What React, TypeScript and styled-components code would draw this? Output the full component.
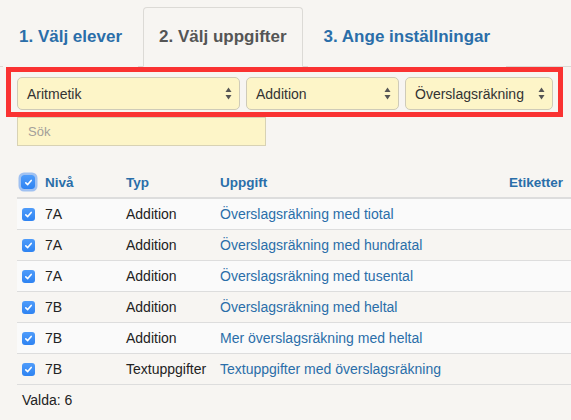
import React from 'react'
import styled, { createGlobalStyle } from 'styled-components'

const GlobalStyle = createGlobalStyle`
  body {
    margin: 0;
    background: #f7f5f2;
    font-family: "Liberation Sans", Arial, sans-serif;
    color: #333;
  }
`

const Page = styled.div`
  width: 571px;
  height: 420px;
  overflow: hidden;
`

const TabBar = styled.ul`
  display: flex;
  margin: 0;
  padding: 7px 0 0 3px;
  list-style: none;
  border-bottom: 1px solid #dcdad6;
`

const Tab = styled.li<{ $active?: boolean }>`
  height: 60px;
  box-sizing: border-box;
  margin-right: 5px;
  margin-bottom: -1px;
  padding: 0 15px;
  display: flex;
  align-items: center;
  font-size: 17px;
  font-weight: bold;
  color: ${p => (p.$active ? '#555' : '#2a6ea9')};
  border: 1px solid ${p => (p.$active ? '#dcdad6' : 'transparent')};
  border-bottom-color: ${p => (p.$active ? '#f7f5f2' : 'transparent')};
  border-radius: 4px 4px 0 0;
  background: #f7f5f2;
`

const FilterBox = styled.div`
  margin: 0 8px 0 6px;
  border: 5px solid #fa3232;
  padding: 5px 5px 2px 6px;
  display: flex;
  gap: 6px;
`

const Select = styled.div<{ $w: number }>`
  width: ${p => p.$w}px;
  height: 33px;
  box-sizing: border-box;
  border: 1px solid #cfcbb8;
  border-radius: 5px;
  background: #fdf5c8;
  display: flex;
  align-items: center;
  justify-content: space-between;
  padding: 0 7px 0 9px;
  font-size: 14px;
  color: #333;
`

const Arrows = () => (
  <svg width="7" height="13" viewBox="0 0 7 13">
    <path d="M3.5 0.5 L6.5 5 L0.5 5 Z" fill="#555" />
    <path d="M3.5 12.5 L6.5 8 L0.5 8 Z" fill="#555" />
  </svg>
)

const Search = styled.div`
  margin-left: 17px;
  width: 249px;
  height: 29px;
  box-sizing: border-box;
  border: 1px solid #d8d2b4;
  background: #fdf5c8;
  display: flex;
  align-items: center;
  padding-left: 10px;
  font-size: 13px;
  color: #a3a09a;
`

const Table = styled.div`
  margin: 15px 0 0 17px;
  width: 554px;
`

const Row = styled.div<{ $head?: boolean; $striped?: boolean }>`
  display: grid;
  grid-template-columns: 28px 81px 94px 1fr auto;
  align-items: center;
  box-sizing: content-box;
  height: ${p => (p.$head ? '30px' : '30px')};
  padding-top: ${p => (p.$head ? '6px' : '0')};
  border-bottom: ${p => (p.$head ? '2px solid #dddddd' : '1px solid #dddddd')};
  background: ${p => (p.$striped ? '#fafafa' : 'transparent')};
  font-size: 14px;
`

const HeadCell = styled.div<{ $right?: boolean }>`
  font-weight: bold;
  font-size: 13.5px;
  color: #2a6ea9;
  text-align: ${p => (p.$right ? 'right' : 'left')};
  padding-right: ${p => (p.$right ? '8px' : '0')};
`

const Cell = styled.div<{ $link?: boolean }>`
  color: ${p => (p.$link ? '#2a6ea9' : '#222')};
  white-space: nowrap;
`

const Box = styled.span<{ $focus?: boolean }>`
  display: inline-flex;
  align-items: center;
  justify-content: center;
  vertical-align: middle;
  margin-left: ${p => (p.$focus ? '4px' : '5px')};
  width: ${p => (p.$focus ? '14px' : '13px')};
  height: ${p => (p.$focus ? '14px' : '13px')};
  border-radius: 3px;
  background: linear-gradient(#4f9cfa, #2e83f2);
  box-shadow: ${p => (p.$focus ? '0 0 0 2.5px rgba(90, 150, 240, 0.55)' : 'none')};
`

const CheckCell = styled.div`
  display: flex;
  align-items: center;
`

const Check = ({ focus }: { focus?: boolean }) => (
  <Box $focus={focus}>
    <svg width="9" height="9" viewBox="0 0 9 9">
      <path d="M1.8 4.8 L3.7 6.6 L7.2 2.4" fill="none" stroke="#fff" strokeWidth="1.6" strokeLinecap="round" strokeLinejoin="round" />
    </svg>
  </Box>
)

const Footer = styled.div`
  padding: 7px 0 0 22px;
  font-size: 14px;
  line-height: 17px;
  color: #222;
`

const rows = [
  ['7A', 'Addition', 'Överslagsräkning med tiotal'],
  ['7A', 'Addition', 'Överslagsräkning med hundratal'],
  ['7A', 'Addition', 'Överslagsräkning med tusental'],
  ['7B', 'Addition', 'Överslagsräkning med heltal'],
  ['7B', 'Addition', 'Mer överslagsräkning med heltal'],
  ['7B', 'Textuppgifter', 'Textuppgifter med överslagsräkning'],
]

export default function App() {
  return (
    <Page>
      <GlobalStyle />
      <TabBar>
        <Tab>1. Välj elever</Tab>
        <Tab $active>2. Välj uppgifter</Tab>
        <Tab>3. Ange inställningar</Tab>
      </TabBar>
      <FilterBox>
        <Select $w={223}>Aritmetik<Arrows /></Select>
        <Select $w={153}>Addition<Arrows /></Select>
        <Select $w={148}>Överslagsräkning<Arrows /></Select>
      </FilterBox>
      <Search>Sök</Search>
      <Table>
        <Row $head>
          <CheckCell><Check focus /></CheckCell>
          <HeadCell>Nivå</HeadCell>
          <HeadCell>Typ</HeadCell>
          <HeadCell>Uppgift</HeadCell>
          <HeadCell $right>Etiketter</HeadCell>
        </Row>
        {rows.map((r, i) => (
          <Row key={i} $striped={i % 2 === 0}>
            <CheckCell><Check /></CheckCell>
            <Cell>{r[0]}</Cell>
            <Cell>{r[1]}</Cell>
            <Cell $link>{r[2]}</Cell>
            <div />
          </Row>
        ))}
      </Table>
      <Footer>Valda: 6</Footer>
    </Page>
  )
}
